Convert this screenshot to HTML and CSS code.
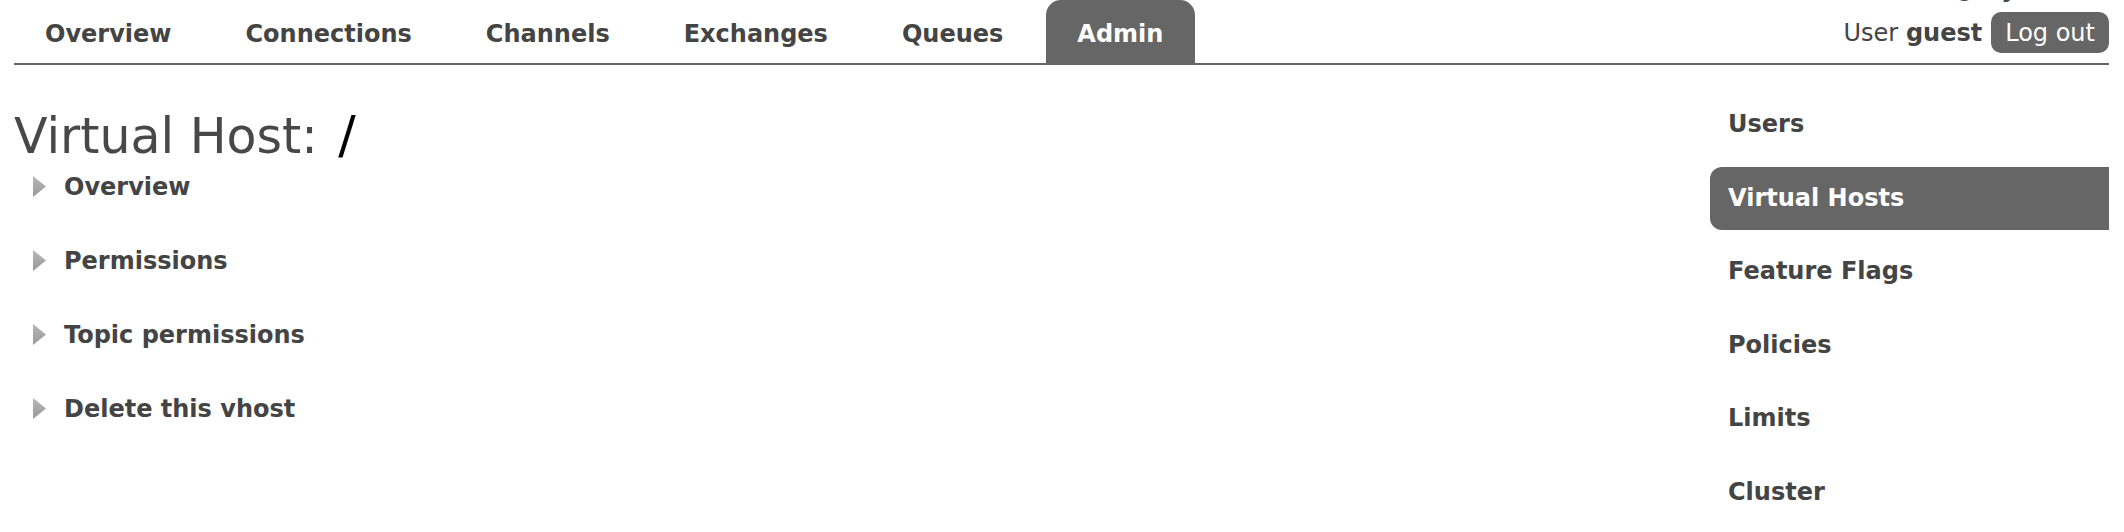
FILE: index.html
```html
<!DOCTYPE html>
<html lang="en">
<head>
<meta charset="utf-8">
<title>RabbitMQ Management - Virtual Host: /</title>
<link rel="stylesheet" href="styles.css">
</head>
<body>
<div class="page">
  <header class="topbar">
    <ul class="tabs">
      <li><a href="#">Overview</a></li>
      <li><a href="#">Connections</a></li>
      <li><a href="#">Channels</a></li>
      <li><a href="#">Exchanges</a></li>
      <li><a href="#">Queues</a></li>
      <li class="active"><a href="#">Admin</a></li>
    </ul>
    <div class="session">
      <div class="cluster">Cluster <b>rabbit@my-rabbit</b></div>
      <div class="user">User&nbsp;<b>guest</b><button class="logout" type="button">Log out</button></div>
    </div>
  </header>
  <main class="main">
    <div class="content">
      <h1>Virtual Host: <span class="vhost">/</span></h1>
      <div class="sections">
        <div class="section"><svg class="arrow" width="13" height="21" viewBox="0 0 13 21"><defs><linearGradient id="ag" x1="0" y1="0" x2="0" y2="1"><stop offset="0" stop-color="#b8b8b8"/><stop offset="1" stop-color="#989898"/></linearGradient></defs><polygon points="0,0 13,10.5 0,21" fill="url(#ag)"/></svg><span>Overview</span></div>
        <div class="section"><svg class="arrow" width="13" height="21" viewBox="0 0 13 21"><polygon points="0,0 13,10.5 0,21" fill="url(#ag)"/></svg><span>Permissions</span></div>
        <div class="section"><svg class="arrow" width="13" height="21" viewBox="0 0 13 21"><polygon points="0,0 13,10.5 0,21" fill="url(#ag)"/></svg><span>Topic permissions</span></div>
        <div class="section"><svg class="arrow" width="13" height="21" viewBox="0 0 13 21"><polygon points="0,0 13,10.5 0,21" fill="url(#ag)"/></svg><span>Delete this vhost</span></div>
      </div>
    </div>
    <nav class="sidenav">
      <ul>
        <li><a href="#">Users</a></li>
        <li class="active"><a href="#">Virtual Hosts</a></li>
        <li><a href="#">Feature Flags</a></li>
        <li><a href="#">Policies</a></li>
        <li><a href="#">Limits</a></li>
        <li><a href="#">Cluster</a></li>
      </ul>
    </nav>
  </main>
</div>
</body>
</html>
```
FILE: styles.css
```css
html, body {
  margin: 0;
  padding: 0;
  background: #fff;
}

body {
  font-family: "DejaVu Sans", Verdana, sans-serif;
  font-size: 24px;
  color: #444;
  overflow: hidden;
}

.page {
  padding: 0 15px 0 14px;
}

/* ---------- top bar ---------- */
.topbar {
  display: flex;
  justify-content: space-between;
  align-items: flex-end;
  height: 63px;
  border-bottom: 2px solid #666;
}

.tabs {
  display: flex;
  gap: 11px;
  list-style: none;
  margin: 0;
  padding: 0;
  align-self: stretch;
}

.tabs a {
  display: block;
  box-sizing: border-box;
  height: 63px;
  padding: 20px 32px 0 31px;
  line-height: 28px;
  font-weight: bold;
  color: #444;
  text-decoration: none;
}

.tabs .active a {
  background: #666;
  color: #fff;
  border-radius: 15px 15px 0 0;
}

.session {
  display: flex;
  flex-direction: column;
  align-items: flex-end;
  padding-bottom: 10px;
}

.cluster {
  line-height: 28px;
  margin-bottom: 9px;
  white-space: nowrap;
}

.user {
  display: flex;
  align-items: baseline;
  line-height: 28px;
  white-space: nowrap;
}

.logout {
  font-family: inherit;
  font-size: 24px;
  line-height: 28px;
  color: #fff;
  background: #666;
  border: 0;
  border-radius: 10px;
  padding: 7px 14px 6px;
  margin-left: 9px;
}

/* ---------- main ---------- */
.main {
  display: flex;
  justify-content: space-between;
}

.content h1 {
  margin: 42px 0 0;
  font-size: 49px;
  font-weight: normal;
  line-height: 57px;
  color: #484848;
}

.vhost {
  display: inline-block;
  margin-left: 5px;
  font-size: 52px;
  color: #000;
}

.sections {
  margin-top: 8px;
  padding-left: 19px;
}

.section {
  display: flex;
  align-items: center;
  gap: 18px;
  line-height: 28px;
  margin-bottom: 46px;
  font-weight: bold;
}

.arrow {
  flex: none;
  margin-top: -2px;
}

/* ---------- side nav ---------- */
.sidenav {
  width: 399px;
  padding-top: 28px;
}

.sidenav ul {
  display: flex;
  flex-direction: column;
  gap: 10.5px;
  list-style: none;
  margin: 0;
  padding: 0;
}

.sidenav a {
  display: block;
  height: 63px;
  line-height: 63px;
  padding-left: 18px;
  font-weight: bold;
  color: #444;
  text-decoration: none;
  border-radius: 12px 0 0 12px;
}

.sidenav .active a {
  background: #666;
  color: #fff;
}
```
